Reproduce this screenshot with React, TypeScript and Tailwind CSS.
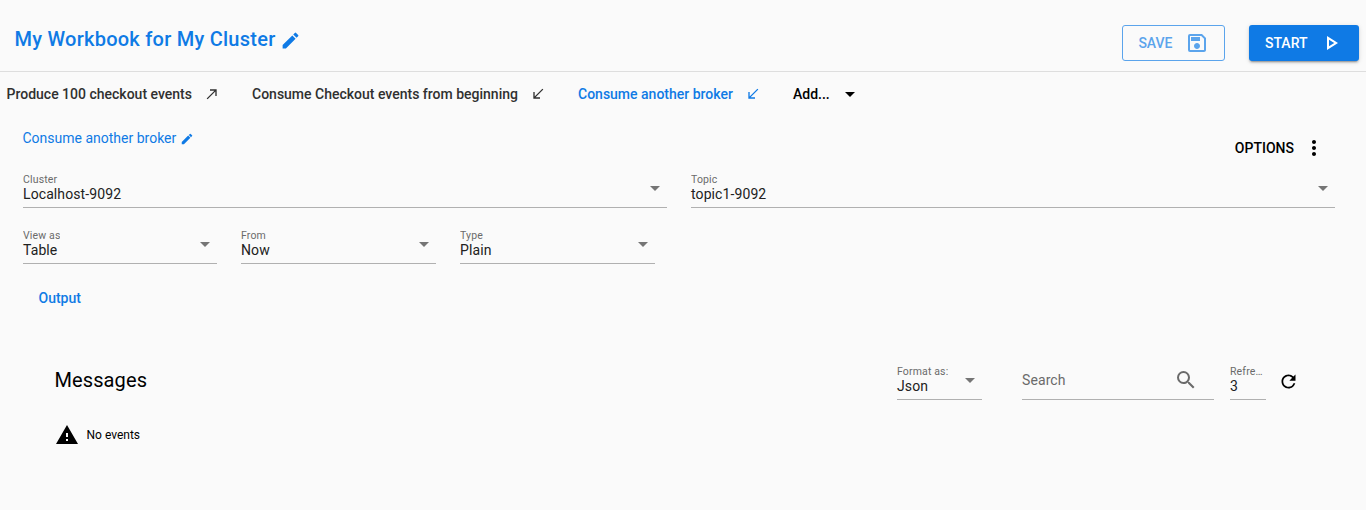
import React from "react";

type IconProps = { path: string; className: string };

function Icon({ path, className }: IconProps) {
  return (
    <svg viewBox="0 0 24 24" fill="currentColor" className={`block shrink-0 ${className}`} aria-hidden="true">
      <path d={path} />
    </svg>
  );
}

const icons = {
  edit: "M3 17.25V21h3.75L17.81 9.94l-3.75-3.75L3 17.25zM20.71 7.04a.996.996 0 0 0 0-1.41l-2.34-2.34a.996.996 0 0 0-1.41 0l-1.83 1.83 3.75 3.75 1.83-1.83z",
  save: "M17 3H5a2 2 0 0 0-2 2v14a2 2 0 0 0 2 2h14c1.1 0 2-.9 2-2V7l-4-4zm2 16H5V5h11.17L19 7.83V19zm-7-7c-1.66 0-3 1.34-3 3s1.34 3 3 3 3-1.34 3-3-1.34-3-3-3zM6 6h9v4H6z",
  play: "M10 8.64L15.27 12 10 15.36V8.64M8 5v14l11-7L8 5z",
  produce: "M9 5v2h6.59L4 18.59 5.41 20 17 8.41V15h2V5z",
  consume: "M20 5.41L18.59 4 7 15.59V9H5v10h10v-2H8.41z",
  more: "M12 8c1.1 0 2-.9 2-2s-.9-2-2-2-2 .9-2 2 .9 2 2 2zm0 2c-1.1 0-2 .9-2 2s.9 2 2 2 2-.9 2-2-.9-2-2-2zm0 6c-1.1 0-2 .9-2 2s.9 2 2 2 2-.9 2-2-.9-2-2-2z",
  search:
    "M15.5 14h-.79l-.28-.27A6.471 6.471 0 0 0 16 9.5 6.5 6.5 0 1 0 9.5 16c1.61 0 3.09-.59 4.23-1.57l.27.28v.79l5 4.99L20.49 19l-4.99-5zm-6 0C7.01 14 5 11.99 5 9.5S7.01 5 9.5 5 14 7.01 14 9.5 11.99 14 9.5 14z",
  refresh:
    "M17.65 6.35A7.958 7.958 0 0 0 12 4c-4.42 0-7.99 3.58-7.99 8s3.57 8 7.99 8c3.73 0 6.84-2.55 7.73-6h-2.08A5.99 5.99 0 0 1 12 18c-3.31 0-6-2.69-6-6s2.69-6 6-6c1.66 0 3.14.69 4.22 1.78L13 11h7V4l-2.35 2.35z",
  warning: "M1 21h22L12 2 1 21zm12-3h-2v-2h2v2zm0-4h-2v-4h2v4z",
  dropdown: "M7 10l5 5 5-5z",
};

function Tab({ label, icon, className }: { label: string; icon: string; className: string }) {
  return (
    <button className={`flex shrink-0 items-center justify-between whitespace-nowrap ${className}`}>
      <span>{label}</span>
      <Icon path={icon} className="size-4" />
    </button>
  );
}

function SelectField({
  label,
  value,
  className,
  arrow = true,
}: {
  label: string;
  value: string;
  className: string;
  arrow?: boolean;
}) {
  return (
    <div className={`flex h-9 shrink-0 items-start justify-between border-b border-[#b0b0b0] ${className}`}>
      <div className="min-w-0">
        <div className="truncate pt-0.5 text-[10.5px] leading-3 tracking-[0.15px] text-[#6a6a6a]">{label}</div>
        <div className="text-sm leading-4 tracking-[0.1px] text-[#212121]">{value}</div>
      </div>
      {arrow && (
        <svg viewBox="0 0 10 5" className="mt-[14px] mr-[7px] h-[5px] w-[10px] shrink-0 fill-[#757575]">
          <path d="M0 0h10L5 5z" />
        </svg>
      )}
    </div>
  );
}

export default function App() {
  return (
    <div className="flex h-[510px] w-[1366px] flex-col overflow-hidden bg-[#fafafa] font-['Roboto',sans-serif] text-sm text-black">
      <header className="flex h-[72px] shrink-0 items-center border-b border-[#dedede] pr-[7px] pl-[14.5px] text-[#0f7ae5]">
        <div className="flex grow items-center gap-[5px] pt-[7px]">
          <h1 className="text-xl leading-8 font-medium tracking-[0.25px] whitespace-nowrap">My Workbook for My Cluster</h1>
          <Icon path={icons.edit} className="mt-[3px] size-[21px]" />
        </div>
        <div className="flex gap-6 pt-[15px]">
          <button className="flex h-9 w-[103px] items-center justify-between rounded-[3px] border border-[#5ba4ec] px-[15px] font-medium text-[#5ba4ec]">
            <span className="pl-[0.4px]">SAVE</span>
            <Icon path={icons.save} className="size-6" />
          </button>
          <button className="flex h-9 w-[110px] items-center justify-between rounded-[3px] bg-[#0f7ae5] px-4 font-medium text-white shadow-[0_3px_1px_-2px_rgba(0,0,0,.2),0_2px_2px_0_rgba(0,0,0,.14),0_1px_5px_0_rgba(0,0,0,.12)]">
            <span>START</span>
            <Icon path={icons.play} className="size-6" />
          </button>
        </div>
      </header>

      <nav className="flex h-[45px] shrink-0 items-center pb-px pl-[6.5px] font-medium text-[#303030]">
        <Tab label="Produce 100 checkout events" icon={icons.produce} className="w-[213.5px]" />
        <Tab label="Consume Checkout events from beginning" icon={icons.consume} className="ml-8 w-[294px]" />
        <Tab label="Consume another broker" icon={icons.consume} className="ml-8 w-[183px] text-[#0f7ae5]" />
        <button className="ml-8 flex w-[69px] items-center justify-between text-black">
          <span>Add...</span>
          <Icon path={icons.dropdown} className="size-6" />
        </button>
      </nav>

      <main className="flex grow flex-col pr-[31px] pl-[22.5px]">
        <div className="flex h-[55px] items-start justify-between">
          <div className="flex h-[42px] items-center gap-1 text-[#0f7ae5]">
            <span>Consume another broker</span>
            <Icon path={icons.edit} className="mt-0.5 size-3.5" />
          </div>
          <button className="flex h-[62px] items-center gap-2 pr-[9px] font-medium">
            <span>OPTIONS</span>
            <Icon path={icons.more} className="size-6" />
          </button>
        </div>

        <div className="flex gap-6 pl-[0.5px]">
          <SelectField label="Cluster" value="Localhost-9092" className="w-[644px]" />
          <SelectField label="Topic" value="topic1-9092" className="w-[644px]" />
        </div>
        <div className="mt-5 flex gap-6 pl-[0.5px]">
          <SelectField label="View as" value="Table" className="w-[194px]" />
          <SelectField label="From" value="Now" className="w-[195px]" />
          <SelectField label="Type" value="Plain" className="w-[195px]" />
        </div>

        <div className="mt-6 pl-4 leading-5 font-medium text-[#0f7ae5]">Output</div>

        <section className="mt-[56px] pl-8">
          <div className="flex h-9">
            <h2 className="grow text-xl leading-8 tracking-[0.1px]">Messages</h2>
            <SelectField label="Format as:" value="Json" className="w-[85px]" />
            <div className="ml-10 flex h-9 w-48 justify-between border-b border-[#b0b0b0] text-[#6a6a6a]">
              <span className="leading-8 tracking-[0.1px]">Search</span>
              <Icon path={icons.search} className="mt-1 mr-4 size-6" />
            </div>
            <SelectField label="Refresh" value="3" arrow={false} className="ml-4 w-9" />
            <Icon path={icons.refresh} className="mt-[7px] mr-[36px] ml-3 size-[21px]" />
          </div>
          <div className="mt-[23px] flex items-center gap-2 text-xs">
            <Icon path={icons.warning} className="size-6" />
            <span>No events</span>
          </div>
        </section>
      </main>
    </div>
  );
}
